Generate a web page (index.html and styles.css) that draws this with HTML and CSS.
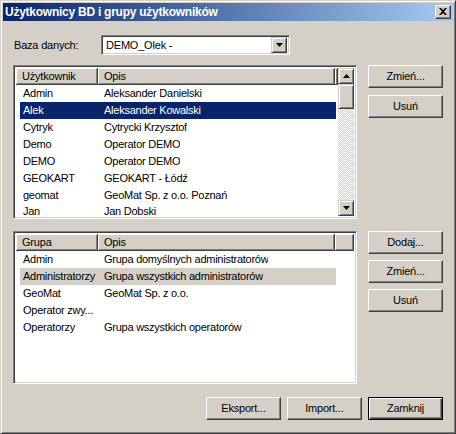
FILE: index.html
```html
<!DOCTYPE html>
<html lang="pl">
<head>
<meta charset="utf-8">
<title>Użytkownicy BD i grupy użytkowników</title>
<link rel="stylesheet" href="styles.css">
</head>
<body>
<div class="window">
  <div class="titlebar">
    <span class="title">Użytkownicy BD i grupy użytkowników</span>
    <span class="close">
      <svg width="8" height="7" viewBox="0 0 8 7"><path d="M0 0h2l2 2 2-2h2L5 3.5 8 7H6L4 5 2 7H0l3-3.5z" fill="#000"/></svg>
    </span>
  </div>
  <div class="content">
    <div class="db-row">
      <span class="label">Baza danych:</span>
      <div class="combo">
        <span class="combo-text">DEMO_Olek -</span>
        <span class="combo-btn"><svg width="7" height="4" viewBox="0 0 7 4"><path d="M0 0h7L3.5 4z" fill="#000"/></svg></span>
      </div>
    </div>

    <div class="section s1">
      <div class="listbox lb1">
        <div class="list-main">
          <div class="header">
            <div class="hcell c1">Użytkownik</div>
            <div class="hcell c2">Opis</div>
            <div class="hcell hfill"></div>
          </div>
          <div class="rows">
            <div class="row"><span class="cell c1">Admin</span><span class="cell c2">Aleksander Danielski</span></div>
            <div class="row sel"><span class="cell c1">Alek</span><span class="cell c2">Aleksander Kowalski</span></div>
            <div class="row"><span class="cell c1">Cytryk</span><span class="cell c2">Cytrycki Krzysztof</span></div>
            <div class="row"><span class="cell c1">Demo</span><span class="cell c2">Operator DEMO</span></div>
            <div class="row"><span class="cell c1">DEMO</span><span class="cell c2">Operator DEMO</span></div>
            <div class="row"><span class="cell c1">GEOKART</span><span class="cell c2">GEOKART - Łódź</span></div>
            <div class="row"><span class="cell c1">geomat</span><span class="cell c2">GeoMat Sp. z o.o. Poznań</span></div>
            <div class="row last"><span class="cell c1">Jan</span><span class="cell c2">Jan Dobski</span></div>
          </div>
        </div>
        <div class="scrollbar">
          <span class="sb-btn"><svg width="7" height="4" viewBox="0 0 7 4"><path d="M3.5 0L7 4H0z" fill="#000"/></svg></span>
          <span class="sb-thumb"></span>
          <span class="sb-track"></span>
          <span class="sb-btn"><svg width="7" height="4" viewBox="0 0 7 4"><path d="M0 0h7L3.5 4z" fill="#000"/></svg></span>
        </div>
      </div>
      <div class="side-buttons b1">
        <span class="btn">Zmień...</span>
        <span class="btn">Usuń</span>
      </div>
    </div>

    <div class="section s2">
      <div class="listbox lb2">
        <div class="list-main">
          <div class="header">
            <div class="hcell c1">Grupa</div>
            <div class="hcell c2">Opis</div>
            <div class="hcell hfill"></div>
          </div>
          <div class="rows">
            <div class="row"><span class="cell c1">Admin</span><span class="cell c2">Grupa domyślnych administratorów</span></div>
            <div class="row sel2"><span class="cell c1">Administratorzy</span><span class="cell c2">Grupa wszystkich administratorów</span></div>
            <div class="row"><span class="cell c1">GeoMat</span><span class="cell c2">GeoMat Sp. z o.o.</span></div>
            <div class="row"><span class="cell c1">Operator zwy...</span><span class="cell c2"></span></div>
            <div class="row"><span class="cell c1">Operatorzy</span><span class="cell c2">Grupa wszystkich operatorów</span></div>
          </div>
        </div>
      </div>
      <div class="side-buttons b2">
        <span class="btn">Dodaj...</span>
        <span class="btn">Zmień...</span>
        <span class="btn">Usuń</span>
      </div>
    </div>

    <div class="bottom-buttons">
      <span class="btn">Eksport...</span>
      <span class="btn">Import...</span>
      <span class="btn default">Zamknij</span>
    </div>
  </div>
</div>
</body>
</html>
```

FILE: styles.css
```css
* { box-sizing: border-box; }
html, body { margin: 0; padding: 0; background: #d4d0c8; }
body {
  width: 456px;
  height: 434px;
  overflow: hidden;
  font-family: "Liberation Sans", Arial, sans-serif;
  font-size: 11px;
  letter-spacing: -0.2px;
  color: #000;
}
.window {
  width: 456px;
  height: 434px;
  background: #d4d0c8;
  border: 1px solid;
  border-color: #d4d0c8 #404040 #404040 #d4d0c8;
  box-shadow: inset 1px 1px #fff, inset -1px -1px #808080;
  padding: 2px;
  display: flex;
  flex-direction: column;
}
.titlebar {
  height: 18px;
  background: linear-gradient(to right, #0a246a, #a6caf0);
  display: flex;
  align-items: center;
  justify-content: space-between;
  padding: 0 2px 0 2px;
  flex: none;
}
.title {
  color: #fff;
  font-weight: bold;
  font-size: 12px;
  letter-spacing: -0.25px;
}
.close {
  width: 16px;
  height: 14px;
  background: #d4d0c8;
  border: 1px solid;
  border-color: #fff #404040 #404040 #fff;
  box-shadow: inset -1px -1px #808080;
  display: flex;
  align-items: center;
  justify-content: center;
  padding-bottom: 1px;
  padding-right: 1px;
}
.close svg { display: block; }
.content {
  flex: 1;
  padding: 14px 10px 0 10px;
  display: flex;
  flex-direction: column;
}
.db-row {
  display: flex;
  align-items: center;
  height: 20px;
}
.label {
  width: 88px;
  padding-left: 1px;
}
.combo {
  width: 189px;
  height: 20px;
  background: #fff;
  border: 1px solid;
  border-color: #808080 #fff #fff #808080;
  box-shadow: inset 1px 1px #404040, inset -1px -1px #d4d0c8;
  padding: 2px;
  display: flex;
  align-items: center;
  justify-content: space-between;
}
.combo-text { padding-left: 2px; }
.combo-btn {
  width: 16px;
  height: 16px;
  background: #d4d0c8;
  border: 1px solid;
  border-color: #d4d0c8 #404040 #404040 #d4d0c8;
  box-shadow: inset 1px 1px #fff, inset -1px -1px #808080;
  display: flex;
  align-items: center;
  justify-content: center;
}
.combo-btn svg, .sb-btn svg { display: block; }
.section {
  display: flex;
  gap: 11px;
  align-items: flex-start;
}
.s1 { margin-top: 10px; }
.s2 { margin-top: 12px; }
.listbox {
  width: 344px;
  background: #fff;
  border: 1px solid;
  border-color: #808080 #fff #fff #808080;
  box-shadow: inset 1px 1px #404040, inset -1px -1px #d4d0c8;
  padding: 2px;
  display: flex;
  overflow: hidden;
}
.lb1 { height: 154px; }
.lb2 { height: 153px; }
.list-main {
  flex: 1;
  display: flex;
  flex-direction: column;
  overflow: hidden;
  min-width: 0;
}
.header {
  display: flex;
  height: 17px;
  flex: none;
}
.hcell {
  background: #d4d0c8;
  border-right: 1px solid #404040;
  border-bottom: 1px solid #404040;
  box-shadow: inset 1px 1px #fff, inset -1px -1px #808080;
  padding-left: 6px;
  display: flex;
  align-items: center;
  white-space: nowrap;
}
.hcell.c1 { width: 82px; }
.hcell.c2 { width: 237px; }
.hfill { flex: 1; padding: 0; }
.rows { flex: 1; overflow: hidden; }
.row {
  height: 17px;
  display: flex;
  align-items: center;
  margin-left: 4px;
  width: 316px;
  white-space: nowrap;
  letter-spacing: -0.25px;
  line-height: 13px;
  flex: none;
}
.row.last { height: 14px; align-items: flex-start; padding-top: 1px; }
.cell { overflow: hidden; }
.cell.c1 { width: 78px; padding-left: 3px; }
.cell.c2 { padding-left: 6px; }
.row.sel { background: #0a246a; color: #fff; }
.row.sel2 { background: #d4d0c8; }
.scrollbar {
  width: 16px;
  flex: none;
  display: flex;
  flex-direction: column;
}
.sb-btn, .sb-thumb {
  height: 16px;
  background: #d4d0c8;
  border: 1px solid;
  border-color: #d4d0c8 #404040 #404040 #d4d0c8;
  box-shadow: inset 1px 1px #fff, inset -1px -1px #808080;
  display: flex;
  align-items: center;
  justify-content: center;
  flex: none;
}
.sb-thumb { height: 25px; }
.sb-track {
  flex: 1;
  background: repeating-conic-gradient(#fff 0 25%, #d4d0c8 0 50%) 0 0 / 2px 2px;
}
.side-buttons {
  display: flex;
  flex-direction: column;
}
.b1 { gap: 7px; }
.b2 { gap: 6px; }
.btn {
  width: 75px;
  height: 23px;
  background: #d4d0c8;
  border: 1px solid;
  border-color: #fff #404040 #404040 #fff;
  box-shadow: inset -1px -1px #808080;
  display: flex;
  align-items: center;
  justify-content: center;
  padding-bottom: 1px;
}
.btn.default {
  border-color: #000;
  box-shadow: inset 1px 1px #fff, inset -1px -1px #404040, inset -2px -2px #808080;
}
.bottom-buttons {
  display: flex;
  justify-content: flex-end;
  gap: 6px;
  margin-top: 13px;
}
```
